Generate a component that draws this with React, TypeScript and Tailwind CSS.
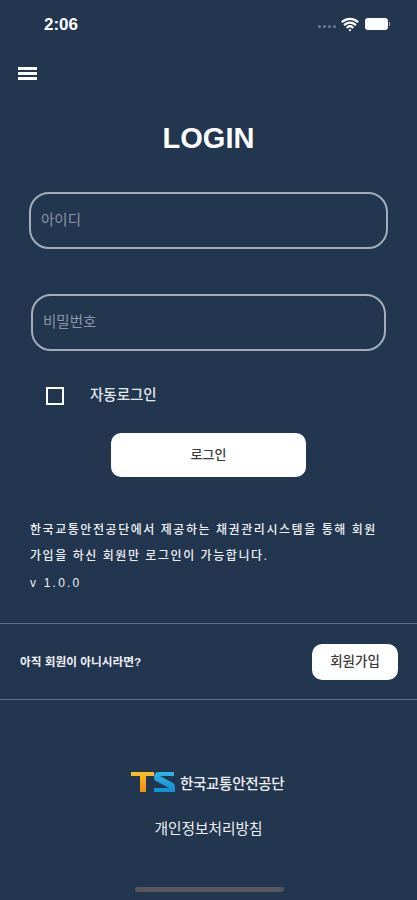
import { Wifi } from "lucide-react";

const font = { fontFamily: '"Liberation Sans", "Noto Sans CJK KR", sans-serif' };

function StatusBar() {
  return (
    <div className="flex h-[48px] items-center justify-between pl-[44px] pr-[27px]">
      <span className="text-[17px] font-bold leading-none text-white">2:06</span>
      <div className="flex items-center">
        <div className="mr-[5px] mt-[4px] flex gap-[2px]">
          {[0, 1, 2, 3].map((i) => (
            <span key={i} className="h-[3px] w-[3px] rounded-full bg-[#6f7d8f]" />
          ))}
        </div>
        <Wifi size={18} strokeWidth={3} className="text-white" />
        <div className="ml-[6px] flex items-center">
          <div className="h-[12px] w-[23px] rounded-[3px] bg-white" />
          <div className="ml-[1px] h-[4px] w-[1px] bg-[#9aa5b3]" />
        </div>
      </div>
    </div>
  );
}

function Field({ label, className }: { label: string; className: string }) {
  return (
    <div className={`flex h-[57px] items-start rounded-[20px] border-2 border-[#a3adb9] pl-[10px] pt-[16px] text-[14.5px] leading-[20px] text-[#8b95a3] ${className}`}>
      {label}
    </div>
  );
}

function TsLogo() {
  return (
    <svg width="44" height="21" viewBox="0 0 44 21">
      <defs>
        <linearGradient id="tsT" x1="0" y1="0" x2="0" y2="1">
          <stop offset="0" stopColor="#ffc02a" />
          <stop offset="1" stopColor="#f08c12" />
        </linearGradient>
        <linearGradient id="tsS" x1="0" y1="0" x2="0" y2="1">
          <stop offset="0" stopColor="#2fb6e6" />
          <stop offset="1" stopColor="#0f8fd0" />
        </linearGradient>
      </defs>
      <path d="M0 0H23V4H15V20H9V4H0Z" fill="url(#tsT)" />
      <path d="M43 0V4H29L42 11Q44 12 44 15V20H23V16H38L25 9Q23 8 23 5Q23 0 28 0Z" fill="url(#tsS)" />
    </svg>
  );
}

export default function App() {
  return (
    <div className="flex h-[900px] w-[417px] flex-col overflow-hidden bg-[#23364f] text-white" style={font}>
      <StatusBar />

      {/* menu icon */}
      <div className="ml-[18px] mt-[19px] flex w-[19px] flex-col gap-[2px]">
        <span className="h-[3px] bg-white" />
        <span className="h-[3px] bg-white" />
        <span className="h-[3px] bg-white" />
      </div>

      <h1 className="mt-[40px] text-center text-[29px] font-bold leading-[36px]">LOGIN</h1>

      <Field label="아이디" className="ml-[29px] mt-[36px] w-[359px]" />
      <Field label="비밀번호" className="ml-[31px] mt-[45px] w-[355px]" />

      <div className="ml-[46px] mt-[34px] flex items-center">
        <div className="h-[18px] w-[18px] border-2 border-white" />
        <span className="ml-[26px] text-[14.5px] font-medium text-[#e4e7eb]">자동로그인</span>
      </div>

      <button className="ml-[111px] mt-[26px] h-[44px] w-[195px] rounded-[10px] bg-white text-[13px] font-medium text-[#3b3b3b]">
        로그인
      </button>

      <div className="ml-[30px] mt-[40px] w-[370px] text-[12px] font-medium leading-[26.5px] tracking-[1.55px] text-[#eef0f3]">
        <p className="whitespace-nowrap">한국교통안전공단에서 제공하는 채권관리시스템을 통해 회원</p>
        <p className="whitespace-nowrap">가입을 하신 회원만 로그인이 가능합니다.</p>
        <p className="tracking-[2.2px]">v 1.0.0</p>
      </div>

      <div className="mt-[27px] flex h-[77px] items-center justify-between border-y border-[#5f6f84] pl-[20px] pr-[19px]">
        <span className="text-[11.7px] font-bold text-[#eef0f3]">아직 회원이 아니시라면?</span>
        <button className="h-[36px] w-[86px] rounded-[10px] bg-white text-[13.5px] font-medium text-[#3b3b3b]">
          회원가입
        </button>
      </div>

      <div className="ml-[131px] mt-[72px] flex items-center">
        <TsLogo />
        <span className="ml-[5px] mt-[2px] text-[14.5px] font-medium leading-none tracking-[-0.3px] text-[#eef0f3]">한국교통안전공단</span>
      </div>

      <p className="mt-[26px] text-center text-[14.7px] leading-[20px] text-[#eef0f3]">개인정보처리방침</p>

      <div className="ml-[135px] mt-[48px] h-[5px] w-[149px] rounded-full bg-[#56565c]" />
    </div>
  );
}
